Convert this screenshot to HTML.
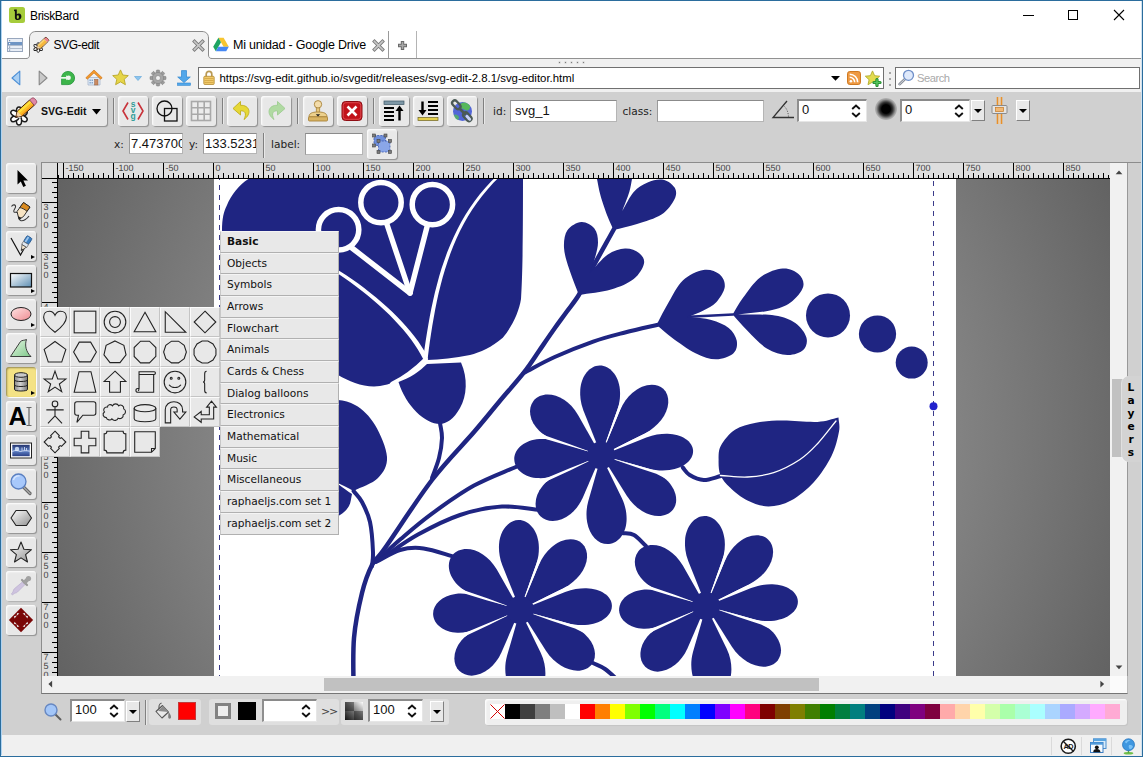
<!DOCTYPE html>
<html lang="en">
<head>
<meta charset="utf-8">
<title>BriskBard - SVG-edit</title>
<style>
*{box-sizing:border-box;margin:0;padding:0}
html,body{width:1143px;height:757px;overflow:hidden;background:#fff}
body{font-family:"Liberation Sans",sans-serif;font-size:12px;color:#000;position:relative}
.abs{position:absolute}
svg{display:block;overflow:visible}
#win{position:absolute;left:0;top:0;width:1143px;height:757px;background:#fff;overflow:hidden}
#title{left:30px;top:8px;font-size:12px;line-height:16px;color:#000;letter-spacing:-.37px}
#tabbar{left:1px;top:30px;width:1141px;height:29px;background:#fff;border-bottom:1px solid #919191}
.tab{position:absolute;top:31px;height:28px;font-size:12.5px;line-height:27px;white-space:nowrap}
#navbar{left:1px;top:59px;width:1141px;height:33px;background:#f0f0f0}
.field{position:absolute;background:#fff;border:1px solid #7a7a7a}
#page{left:1px;top:92px;width:1141px;height:643px;background:#d0d0d0}
#status{left:1px;top:735px;width:1141px;height:22px;background:#f0f0f0}
.se{font-family:"DejaVu Sans","Liberation Sans",sans-serif}
/* svg-edit */
.tb{position:absolute;width:30px;height:30px;background:#e8e8e8;border-radius:3px;box-shadow:inset 1px 1px 2px #fff,1px 1px 1px rgba(0,0,0,.3)}
.tb.cur{background:#f4e284;box-shadow:inset 1px 1px 2px rgba(0,0,0,.4),1px 1px 1px #fff}
.tb svg{position:absolute;left:3px;top:3px;width:24px;height:24px}
.sep{position:absolute;width:2px;border-left:1px solid #808080;border-right:1px solid #e8e8e8}
.lbl{position:absolute;font-family:"DejaVu Sans","Liberation Sans",sans-serif;font-size:10.6px;line-height:14px;color:#222;white-space:nowrap}
.inp{position:absolute;background:#fff;border:1px solid #b5b5b5;border-top-color:#8b8b8b;border-left-color:#9a9a9a;font-size:13px;line-height:20px;padding-left:4px;overflow:hidden;white-space:nowrap;color:#111}
.inp.spin{border-top:2px solid #8a8a8a;border-left:2px solid #8f8f8f;border-right:1px solid #e6e6e6;border-bottom:1px solid #e6e6e6;line-height:18px}
.dd{position:absolute;width:14px;height:21px;background:#e8e8e8;border:1px solid #fff;border-right-color:#808080;border-bottom-color:#808080}
.dd:after{content:"";position:absolute;left:2px;top:8px;border:4px solid transparent;border-top:4px solid #000;border-bottom:none}
#work{left:58px;top:179px;width:1053px;height:497px;overflow:hidden;background:radial-gradient(circle 1000px at 527px 250px,#bbb 0.3%,#222 100%)}
#canvas{position:absolute;left:156px;top:0;width:742px;height:497px;background:#fff}
.cat{position:absolute;left:220px;width:119px;height:22px;background:#e8e8e8;border:1px solid #b0b0b0;border-top-color:#f4f4f4;border-left-color:#c8c8c8;font-family:"DejaVu Sans","Liberation Sans",sans-serif;font-size:10.6px;line-height:19px;padding-left:6px;color:#111;white-space:nowrap}
.cell{position:absolute;width:30px;height:30px;background:#e8e8e8;border:1px solid #fbfbfb;border-right-color:#c4c4c4;border-bottom-color:#c4c4c4}
.cell svg{position:absolute;left:1px;top:1px;width:26px;height:26px;fill:none;stroke:#222;stroke-width:1}
</style>
</head>
<body>
<div id="win">

<!-- title bar -->
<!-- app icon -->
<svg class="abs" style="left:9px;top:7px" width="16" height="16" viewBox="0 0 16 16"><rect width="16" height="16" rx="2.5" fill="#a6cc3b"/><path d="M5.2,2.6h2.6v4.6c.6-.5 1.300-.8 2.100-.7c1.700.2 2.600 1.500 2.500 3.300c-.1 1.900-1.400 3.300-3.600 3.300c-1.700 0-2.900-.8-2.900-2.700V4.300l-.9-.3z M7.800,8.700v2.100c0,.7.400,1 .9,1c.8,0 1.200-.8 1.200-1.900c0-1.100-.4-1.700-1.100-1.700c-.4,0-.8.200-1,.5z" fill="#111"/></svg>
<div class="abs" id="title">BriskBard</div>
<!-- window controls -->
<svg class="abs" style="left:1023px;top:10px" width="102" height="11" viewBox="0 0 102 11" fill="none" stroke="#000" stroke-width="1" shape-rendering="crispEdges"><path d="M0,5.500h10.500"/><rect x="45.500" y=".5" width="9" height="9"/><path d="M91,0l10,10M101,0l-10,10" shape-rendering="auto" stroke-width="1.100"/></svg>

<!-- tab bar -->
<div class="abs" id="tabbar"></div>
<!-- tab list icon -->
<svg class="abs" style="left:7px;top:37px" width="16" height="16" viewBox="0 0 16 16"><rect x=".5" y="1.500" width="15" height="13" fill="#e9eef6" stroke="#98a7bd"/><rect x="1" y="5" width="14" height="3" fill="#6f95c4"/><path d="M1,8.500h14M1,11.500h14" stroke="#b0bccd"/><rect x="2" y="3" width="1.200" height="1.200" fill="#7890b0"/><rect x="2" y="6" width="1.200" height="1.200" fill="#fff"/><rect x="2" y="9.500" width="1.200" height="1.200" fill="#7890b0"/><rect x="2" y="12.500" width="1.200" height="1.200" fill="#7890b0"/></svg>
<svg class="abs" style="left:26px;top:30px" width="186" height="29" viewBox="0 0 186 29"><path d="M0,28.500C2,28.500 3.500,27.500 3.500,25V8C3.500,4 6,1.500 10,1.500H176C180,1.500 182.500,4 182.500,8V25C182.500,27.500 184,28.500 186,28.500V29H0Z" fill="#f0f0f0"/><path d="M0,28.500C2,28.500 3.500,27.500 3.500,25V8C3.500,4 6,1.500 10,1.500H176C180,1.500 182.500,4 182.500,8V25C182.500,27.500 184,28.500 186,28.500" fill="none" stroke="#8a8a8a" stroke-width="1"/></svg>
<div class="tab" style="left:53.500px;top:32px;font-size:12px;letter-spacing:-.42px">SVG-edit</div>
<!-- svg-edit favicon -->
<svg class="abs" style="left:33px;top:36px" width="17" height="17" viewBox="0 0 17 17"><g transform="translate(5.200,11.500)"><g fill="#fff" stroke="#222" stroke-width=".9"><ellipse rx="1.400" ry="2.300" cy="-2.600"/><ellipse rx="1.400" ry="2.300" cy="-2.600" transform="rotate(60)"/><ellipse rx="1.400" ry="2.300" cy="-2.600" transform="rotate(120)"/><ellipse rx="1.400" ry="2.300" cy="-2.600" transform="rotate(180)"/><ellipse rx="1.400" ry="2.300" cy="-2.600" transform="rotate(240)"/><ellipse rx="1.400" ry="2.300" cy="-2.600" transform="rotate(300)"/></g></g><g transform="rotate(-44 9 8)"><path d="M5,5.600h10.500a1.300,1.300 0 0 1 1.300,1.300v2.200a1.300,1.300 0 0 1 -1.300,1.300H5L1.800,8z" fill="none" stroke="#4a2a10" stroke-width=".9"/><rect x="5" y="5.800" width="9" height="4.400" fill="#f6b73c"/><rect x="5" y="5.800" width="9" height="1.500" fill="#fbd875"/><path d="M14,5.800h1.500a1.300,1.300 0 0 1 1.300,1.300v1.800a1.300,1.300 0 0 1 -1.300,1.300h-1.500z" fill="#e8828c"/><path d="M5,5.800L2,8L5,10.200z" fill="#f3d6a8"/><path d="M3,7.300L2,8L3,8.700z" fill="#333"/></g></svg>
<!-- tab close 1 -->
<svg class="abs" style="left:193px;top:40px" width="11" height="11" viewBox="0 0 11 11"><path d="M1.500,1.500L9.500,9.500M9.500,1.500L1.500,9.500" stroke="#7a7a7a" stroke-width="3.400" stroke-linecap="square"/><path d="M1.500,1.500L9.500,9.500M9.500,1.500L1.500,9.500" stroke="#c8c8c8" stroke-width="1.700" stroke-linecap="square"/></svg>
<!-- google drive icon -->
<svg class="abs" style="left:213px;top:37px" width="16" height="15" viewBox="0 0 16 15"><path d="M5.400,.8h5.200l5.200,9h-5.200z" fill="#f7c530"/><path d="M5.400,.8L.2,9.800l2.600,4.500L8,5.300z" fill="#1da462"/><path d="M5.400,9.800h10.400l-2.600,4.500H2.800z" fill="#4688f4"/></svg>
<div class="tab" style="left:233px;top:32px;letter-spacing:-.22px">Mi unidad - Google Drive</div>
<svg class="abs" style="left:373px;top:40px" width="11" height="11" viewBox="0 0 11 11"><path d="M1.500,1.500L9.500,9.500M9.500,1.500L1.500,9.500" stroke="#7a7a7a" stroke-width="3.400" stroke-linecap="square"/><path d="M1.500,1.500L9.500,9.500M9.500,1.500L1.500,9.500" stroke="#c8c8c8" stroke-width="1.700" stroke-linecap="square"/></svg>
<div class="abs" style="left:388px;top:31px;width:1px;height:27px;background:#9a9a9a"></div>
<div class="abs" style="left:416px;top:31px;width:1px;height:27px;background:#b4b4b4"></div>
<svg class="abs" style="left:397px;top:40px" width="11" height="11" viewBox="0 0 11 11"><path d="M5.500,1v9M1,5.500h9" stroke="#6a6a6a" stroke-width="3.400"/><path d="M5.500,2v7M2,5.500h7" stroke="#a8a8a8" stroke-width="1.500"/></svg>

<!-- nav bar -->
<div class="abs" id="navbar"></div>
<div class="abs" style="left:559px;top:62px;width:1px;height:1px;background:#7d7d7d;box-shadow:0 0 0 .5px rgba(125,125,125,.35)"></div><div class="abs" style="left:565px;top:62px;width:1px;height:1px;background:#7d7d7d;box-shadow:0 0 0 .5px rgba(125,125,125,.35)"></div><div class="abs" style="left:571px;top:62px;width:1px;height:1px;background:#7d7d7d;box-shadow:0 0 0 .5px rgba(125,125,125,.35)"></div><div class="abs" style="left:577px;top:62px;width:1px;height:1px;background:#7d7d7d;box-shadow:0 0 0 .5px rgba(125,125,125,.35)"></div><div class="abs" style="left:583px;top:62px;width:1px;height:1px;background:#7d7d7d;box-shadow:0 0 0 .5px rgba(125,125,125,.35)"></div>
<!-- back / forward -->
<svg class="abs" style="left:11px;top:70px" width="10" height="16" viewBox="0 0 10 16"><path d="M8.800,1.200V14.800L1,8z" fill="#a9cff3" stroke="#4b8fd6" stroke-width="1.100" stroke-linejoin="round"/></svg>
<svg class="abs" style="left:38px;top:70px" width="10" height="16" viewBox="0 0 10 16"><path d="M1.200,1.200V14.800L9,8z" fill="#c9c9c9" stroke="#878787" stroke-width="1.100" stroke-linejoin="round"/></svg>
<!-- reload -->
<svg class="abs" style="left:61px;top:71px" width="14" height="14" viewBox="0 0 14 14"><path d="M7,.4a6.600,6.600 0 1 1 0,13.200H.6V7.600A6.600,6.600 0 0 1 7,.4z" fill="#3db54a" stroke="#23933a" stroke-width=".8"/><path d="M1.500,2.200L6,2.200" stroke="#3db54a" stroke-width="1"/><circle cx="7.600" cy="6.800" r="2.300" fill="#eef6ee"/><path d="M0,6h6.200v1.700H0z" fill="#eef6ee"/><path d="M5.200,4.300l2.800,2.500l-2.800,2.500z" fill="#eef6ee"/><path d="M.3,.3h3.500L.3,3.500z" fill="#f0f0f0"/></svg>
<!-- home -->
<svg class="abs" style="left:85px;top:69px" width="18" height="17" viewBox="0 0 18 17"><path d="M3,8.500h12v7.500H3z" fill="#dfeaf6" stroke="#9db0c8" stroke-width=".7"/><path d="M9,1L.8,8.800l1.500,1.400L9,3.900l6.700,6.300l1.500-1.400z" fill="#f39a2e" stroke="#c86d12" stroke-width=".6"/><rect x="9.600" y="10.300" width="3.400" height="5.700" fill="#c98a62" stroke="#96603f" stroke-width=".5"/><path d="M4.500,10.500h1.300v1.500H4.500zM6.600,10.500h1.300v1.500H6.600zM4.500,13h1.300v1.500H4.500zM6.600,13h1.300v1.500H6.600z" fill="#7ea0c8"/></svg>
<!-- star -->
<svg class="abs" style="left:112px;top:69px" width="17" height="17" viewBox="0 0 17 17"><path d="M8.500,.9l2.300,5.100l5.500,.6l-4.100,3.700l1.200,5.400l-4.900-2.800l-4.900,2.800l1.200-5.400L.7,6.600l5.500-.6z" fill="#e6d548" stroke="#b9a72a" stroke-width=".9" stroke-linejoin="round"/></svg>
<svg class="abs" style="left:134px;top:76px" width="8" height="5" viewBox="0 0 8 5"><path d="M.5,.5h7L4,4.500z" fill="#8cc4ee" stroke="#5aa2d8" stroke-width=".6"/></svg>
<!-- gear -->
<svg class="abs" style="left:150px;top:70px" width="16" height="16" viewBox="0 0 16 16"><g transform="translate(8,8)"><g fill="#9b9b9b" stroke="#7b7b7b" stroke-width=".5"><rect x="-1.700" y="-8" width="3.400" height="16" rx=".8"/><rect x="-1.700" y="-8" width="3.400" height="16" rx=".8" transform="rotate(45)"/><rect x="-1.700" y="-8" width="3.400" height="16" rx=".8" transform="rotate(90)"/><rect x="-1.700" y="-8" width="3.400" height="16" rx=".8" transform="rotate(135)"/></g><circle r="5.600" fill="#a6a6a6" stroke="#7b7b7b" stroke-width=".5"/><circle r="2.500" fill="#f0f0f0" stroke="#7b7b7b" stroke-width=".6"/></g></svg>
<!-- download -->
<svg class="abs" style="left:176px;top:70px" width="16" height="16" viewBox="0 0 16 16"><path d="M5.500,.6h5v6.400h3.800L8,12.600L1.700,7h3.800z" fill="#52a7ea" stroke="#2f86d0" stroke-width=".7" stroke-linejoin="round"/><rect x="1.500" y="13" width="13" height="2.300" fill="#52a7ea" stroke="#2f86d0" stroke-width=".6"/></svg>
<!-- url field -->
<div class="field" style="left:198px;top:67px;width:686px;height:22px;border-color:#707070"></div>
<svg class="abs" style="left:203px;top:70px" width="12" height="15" viewBox="0 0 12 15"><path d="M3.200,7V4.200a2.800,2.800 0 0 1 5.600,0V7" fill="none" stroke="#b99a55" stroke-width="1.700"/><rect x=".8" y="6.300" width="10.400" height="8.200" rx="1" fill="#f0c96a" stroke="#b48a32" stroke-width=".8"/><path d="M1.500,8.500h9M1.500,10.500h9M1.500,12.500h9" stroke="#d2a444" stroke-width=".8"/></svg>
<div class="abs" style="left:219.500px;top:70px;font-size:11.380px;line-height:16px;white-space:nowrap;color:#000">https://svg-edit.github.io/svgedit/releases/svg-edit-2.8.1/svg-editor.html</div>
<svg class="abs" style="left:831px;top:76px" width="9" height="5" viewBox="0 0 9 5"><path d="M0,0h9L4.500,4.800z" fill="#000"/></svg>
<!-- rss -->
<svg class="abs" style="left:847px;top:71px" width="14" height="14" viewBox="0 0 14 14"><rect x=".5" y=".5" width="13" height="13" rx="2.300" fill="#ee9a43" stroke="#d07a22"/><circle cx="3.900" cy="10.200" r="1.300" fill="#fff"/><path d="M2.700,6.200a5,5 0 0 1 5,5M2.700,3.200a8,8 0 0 1 8,8" fill="none" stroke="#fff" stroke-width="1.500"/></svg>
<!-- star plus -->
<svg class="abs" style="left:865px;top:70px" width="17" height="17" viewBox="0 0 17 17"><path d="M7.500,.9l2.100,4.800l5.100,.5l-3.800,3.500l1.100,5l-4.500-2.600L3,14.700l1.100-5L.3,6.200l5.100-.5z" fill="#e2dc4e" stroke="#b3ab2c" stroke-width=".9" stroke-linejoin="round"/><path d="M12,9.500v6M9,12.500h6" stroke="#1d8a28" stroke-width="3.200" stroke-linecap="round"/><path d="M12,9.700v5.600M9.200,12.500h5.600" stroke="#56c45e" stroke-width="1.500" stroke-linecap="round"/></svg>
<div class="abs" style="left:889px;top:72px;width:2px;height:2px;background:#a5a5a5"></div><div class="abs" style="left:889px;top:78px;width:2px;height:2px;background:#a5a5a5"></div><div class="abs" style="left:889px;top:84px;width:2px;height:2px;background:#a5a5a5"></div>
<!-- search -->
<div class="field" style="left:895px;top:67px;width:245px;height:22px;border-color:#707070"></div>
<svg class="abs" style="left:898px;top:69px" width="17" height="17" viewBox="0 0 17 17"><path d="M7,10L1.500,15.200" stroke="#8a8f99" stroke-width="2.600" stroke-linecap="round"/><path d="M7,10L1.500,15.200" stroke="#cfd4dc" stroke-width="1" stroke-linecap="round"/><circle cx="10.500" cy="6.300" r="5" fill="#dfe9fb" stroke="#6f8fc8" stroke-width="1.300"/></svg>
<div class="abs" style="left:917px;top:70px;font-size:11.200px;line-height:16px;color:#a9a9a9;letter-spacing:-.5px">Search</div>

<!-- status bar -->
<div class="abs" id="status"></div>
<div class="abs" style="left:1051px;top:737px;width:1px;height:18px;background:#dadada"></div>
<div class="abs" style="left:1081px;top:737px;width:1px;height:18px;background:#dadada"></div>
<div class="abs" style="left:1111px;top:737px;width:1px;height:18px;background:#dadada"></div>
<!-- ad icon -->
<svg class="abs" style="left:1059.500px;top:737.500px" width="16.500" height="16.500" viewBox="0 0 17 17"><circle cx="8.500" cy="8.500" r="7.300" fill="#fff" stroke="#1a1a1a" stroke-width="1.600"/><path d="M3.300,3.300L13.700,13.700" stroke="#1a1a1a" stroke-width="1.400"/><text x="8.500" y="11.300" font-family="Liberation Sans, sans-serif" font-weight="700" font-size="7.500" text-anchor="middle" fill="#1a1a1a" letter-spacing="-.5">AD</text></svg>
<!-- user windows icon -->
<svg class="abs" style="left:1090px;top:738px" width="17" height="15" viewBox="0 0 17 15"><rect x="3.500" y=".8" width="12.500" height="9.700" fill="#d9edfb" stroke="#4d8fcf" stroke-width="1"/><rect x="3.500" y=".8" width="12.500" height="2.200" fill="#5aa5e0"/><rect x=".5" y="4.500" width="12.500" height="10" fill="#f4faff" stroke="#3d7fc4" stroke-width="1"/><rect x=".5" y="4.500" width="12.500" height="2.200" fill="#4f9bdc"/><circle cx="6.800" cy="9.300" r="1.900" fill="#111"/><path d="M3.200,14.300c0-2.300 1.500-3.300 3.600-3.300s3.600,1 3.600,3.300z" fill="#111"/></svg>
<!-- globe icon -->
<svg class="abs" style="left:1120.500px;top:737.500px" width="15" height="17" viewBox="0 0 17 19"><ellipse cx="8.500" cy="17.200" rx="5.500" ry="1.500" fill="#6fbf4a"/><rect x="7.700" y="13" width="1.600" height="4" fill="#5aa83a"/><circle cx="8.500" cy="7.500" r="6.800" fill="#3f97e0" stroke="#1d6db8" stroke-width=".8"/><path d="M4.500,4c1.500-1.800 4-2.300 6-1.500c-1,1.200-3,1-3.500,2.500c-.4,1.300-1.800,.8-2.500,-1zM9,8c1.500-.5 3.500,0 4.500,1.500c-.5,1.800-2,3-3.500,3.200c-.8-1.200-1.800-3-1-4.700z" fill="#8fd0ff" opacity=".75"/></svg>


<!-- page -->
<div class="abs" id="page"></div>

<!-- ===== svg-edit top toolbar ===== -->
<div class="tb" style="left:6px;top:96px;width:101px"></div>
<svg class="abs" style="left:8px;top:96px" width="32" height="30" viewBox="0 0 32 30"><g transform="translate(11,20)"><g fill="#fff" stroke="#1a1a1a" stroke-width="1.500"><ellipse rx="2.600" ry="4.300" cy="-4.800"/><ellipse rx="2.600" ry="4.300" cy="-4.800" transform="rotate(60)"/><ellipse rx="2.600" ry="4.300" cy="-4.800" transform="rotate(120)"/><ellipse rx="2.600" ry="4.300" cy="-4.800" transform="rotate(180)"/><ellipse rx="2.600" ry="4.300" cy="-4.800" transform="rotate(240)"/><ellipse rx="2.600" ry="4.300" cy="-4.800" transform="rotate(300)"/></g><circle r="2.200" fill="#fff"/></g><g transform="rotate(-42 18 12)"><path d="M9.500,8.500h16.500v7H9.500L4,12z" fill="#f8a01c" stroke="#3a1c05" stroke-width=".9" stroke-linejoin="round"/><rect x="9.500" y="9" width="16.500" height="2.600" fill="#ffe13a"/><rect x="9.500" y="11.600" width="16.500" height="1.800" fill="#fbc02a"/><path d="M26,8.500h2.300a2.400,2.400 0 0 1 2.400,2.400v2.200a2.400,2.400 0 0 1 -2.400,2.400h-2.300z" fill="#e089a6" stroke="#8a3d55" stroke-width=".7"/><path d="M9.500,8.900L4.500,12L9.500,15.100z" fill="#f3d3a4"/><path d="M6.300,10.900L4.500,12L6.300,13.100z" fill="#5a2a1a"/></g></svg>
<div class="abs" style="left:41px;top:104px;font-size:10.500px;font-weight:700;line-height:14px;color:#111;white-space:nowrap">SVG-Edit</div>
<svg class="abs" style="left:91.500px;top:108.500px" width="9" height="5.500" viewBox="0 0 9 5.500"><path d="M0,0h9L4.500,5.500z" fill="#000"/></svg>
<div class="sep" style="left:113px;top:98px;height:26px"></div>

<!-- source -->
<div class="tb" style="left:118px;top:96px"><svg viewBox="0 0 24 24"><path d="M7,3.500L2,12L7,20.500M17,3.500L22,12L17,20.500" fill="none" stroke="#c8323a" stroke-width="1.600"/><g font-family="Liberation Sans, sans-serif" font-weight="700" font-size="8.500" fill="#2f9c98" text-anchor="middle"><text x="12" y="7.500">s</text><text x="12" y="14">v</text><text x="12" y="20">g</text></g></svg></div>
<!-- wireframe -->
<div class="tb" style="left:152px;top:96px"><svg viewBox="0 0 24 24"><circle cx="9.500" cy="9.500" r="7.500" fill="none" stroke="#111" stroke-width="1.300"/><rect x="9.500" y="9.500" width="12.500" height="12.500" fill="none" stroke="#111" stroke-width="1.300"/></svg></div>
<!-- grid -->
<div class="tb" style="left:186px;top:96px"><svg viewBox="0 0 24 24"><rect x="2.500" y="2.500" width="19" height="19" fill="#ececec" stroke="#a9a9a9" stroke-width="1.600"/><path d="M8.800,2.500v19M15.200,2.500v19M2.500,8.800h19M2.500,15.200h19" stroke="#a9a9a9" stroke-width="1.600"/></svg></div>
<div class="sep" style="left:222px;top:98px;height:26px"></div>
<!-- undo -->
<div class="tb" style="left:227px;top:96px"><svg viewBox="0 0 24 24"><path d="M10.500,2.500L3,9.500l7.500,6.500v-4.200c4.500-.3 6.500,2.500 3.500,8.700c8-5.500 6-14.500-3.500-14.200z" fill="#e6d837" stroke="#bfae1c" stroke-width=".9" stroke-linejoin="round"/></svg></div>
<!-- redo -->
<div class="tb" style="left:261px;top:96px"><svg viewBox="0 0 24 24" opacity=".75"><path d="M13.500,2.500L21,9.500l-7.500,6.500v-4.200c-4.500-.3-6.500,2.500-3.500,8.700c-8-5.500-6-14.500 3.500-14.200z" fill="#9ed68b" stroke="#86c474" stroke-width=".9" stroke-linejoin="round"/></svg></div>
<div class="sep" style="left:297px;top:98px;height:26px"></div>
<!-- stamp -->
<div class="tb" style="left:303px;top:96px"><svg viewBox="0 0 24 24"><rect x="10.300" y="8" width="3.400" height="6.500" fill="#e8c87c" stroke="#a8833a" stroke-width=".8"/><circle cx="12" cy="5.300" r="3.700" fill="#f3dcaa" stroke="#a8833a" stroke-width=".9"/><path d="M3,18c0-3.500 2.500-5 9-5s9,1.500 9,5z" fill="#ecd08c" stroke="#a8833a" stroke-width=".9"/><rect x="2.500" y="17.800" width="19" height="4.200" rx="1" fill="#d9b463" stroke="#a8833a" stroke-width=".9"/><path d="M9.800,15.200h4.400l-2.200,2.400z" fill="#222"/></svg></div>
<!-- delete -->
<div class="tb" style="left:337px;top:96px"><svg viewBox="0 0 24 24"><rect x="2" y="2.500" width="20" height="19" rx="3.500" fill="#c2131b" stroke="#8e0d13" stroke-width="1"/><rect x="3.200" y="3.700" width="17.600" height="16.600" rx="2.600" fill="none" stroke="#e0575c" stroke-width=".8"/><path d="M7.500,7.500l9,9M16.500,7.500l-9,9" stroke="#fff" stroke-width="2.600"/></svg></div>
<div class="sep" style="left:373px;top:98px;height:26px"></div>
<!-- move top -->
<div class="tb" style="left:379px;top:96px"><svg viewBox="0 0 24 24"><rect x="2" y="2" width="20" height="3.500" fill="#7d97a6" stroke="#3d5666" stroke-width=".7"/><path d="M2,9h10M2,13h10M2,17h10M2,21h10" stroke="#000" stroke-width="2.200"/><path d="M17.500,21.500V11" stroke="#000" stroke-width="2.400"/><path d="M13.500,12l4-5.500l4,5.500z" fill="#000"/></svg></div>
<!-- move bottom -->
<div class="tb" style="left:413px;top:96px"><svg viewBox="0 0 24 24"><rect x="2" y="18.500" width="20" height="3" fill="#e3cf4b" stroke="#6e6320" stroke-width=".7"/><path d="M12,3h10M12,7h10M12,11h10M12,15h10" stroke="#000" stroke-width="2.200"/><path d="M6.500,2.500V12" stroke="#000" stroke-width="2.400"/><path d="M2.500,11l4,5.500l4-5.500z" fill="#000"/></svg></div>
<!-- link -->
<div class="tb" style="left:447px;top:96px"><svg viewBox="0 0 24 24"><circle cx="12.500" cy="12.500" r="9.500" fill="#5265d8"/><path d="M11,4.500c3-2 7-.5 9,2.500c.5,2.500-1,4.500-3.500,4.500c-2.500-.5-3-2-5-2c-1.500-.5-2-3.500-.5-5z" fill="#55b85c"/><path d="M4,16c2-1 4,0 5,2c0,1.500-.5,2.500-1.500,3c-2-1-3-3-3.500-5z" fill="#55b85c" opacity=".8"/><g fill="none" stroke="#4b5a55" stroke-width="2.300"><rect x="-2.600" y="-6" width="5.200" height="10" rx="2.600" transform="translate(7,6.500) rotate(-42)"/><rect x="-2.600" y="-6" width="5.200" height="10" rx="2.600" transform="translate(18,18.500) rotate(-42)"/><path d="M9.500,9.500L16,16" stroke-width="2.600"/></g><rect x="-1.400" y="-3.500" width="2.800" height="7" rx="1.400" transform="translate(18.300,18.800) rotate(-42)" fill="#c9d3f5"/></svg></div>
<div class="sep" style="left:483px;top:98px;height:26px"></div>

<div class="lbl" style="left:493px;top:104px">id:</div>
<div class="inp" style="left:510px;top:100px;width:107px;height:22px">svg_1</div>
<div class="lbl" style="left:622.500px;top:104px">class:</div>
<div class="inp" style="left:657px;top:100px;width:107px;height:22px"></div>
<!-- angle -->
<svg class="abs" style="left:771px;top:100px" width="24" height="19" viewBox="0 0 24 19"><path d="M16,1L2,17.500H23" fill="none" stroke="#333" stroke-width="1.300"/><path d="M13.500,6.500c2.500,2.500 4,6.500 4,11" fill="none" stroke="#555" stroke-width=".9" stroke-dasharray="1.200 1.300"/></svg>
<div class="inp spin" style="left:797px;top:99px;width:70px;height:23px;padding-left:3px">0</div>
<svg class="abs" style="left:851px;top:104px" width="10" height="14" viewBox="0 0 10 14" fill="none" stroke="#111" stroke-width="1.900"><path d="M1.200,5L5,1.500L8.800,5M1.200,9L5,12.500L8.800,9"/></svg>
<!-- blur -->
<div class="abs" style="left:875px;top:98px;width:22px;height:22px;border-radius:50%;background:radial-gradient(circle,#000 0%,#000 28%,rgba(0,0,0,.75) 44%,rgba(0,0,0,.25) 62%,rgba(0,0,0,0) 80%)"></div>
<div class="inp spin" style="left:900px;top:99px;width:70px;height:23px;padding-left:3px">0</div>
<svg class="abs" style="left:954px;top:104px" width="10" height="14" viewBox="0 0 10 14" fill="none" stroke="#111" stroke-width="1.900"><path d="M1.200,5L5,1.500L8.800,5M1.200,9L5,12.500L8.800,9"/></svg>
<div class="dd" style="left:971px;top:100px"></div>
<!-- align/slider icon -->
<svg class="abs" style="left:991px;top:97px" width="17" height="27" viewBox="0 0 17 27"><path d="M6.500,0V27M10.500,0V27" stroke="#e8902a" stroke-width="1.600"/><path d="M8.500,0V27" stroke="#f7cf9c" stroke-width="1.400"/><rect x="1" y="8.500" width="15" height="8" rx="1" fill="#e4e4e4" stroke="#8a8a8a" stroke-width="1"/><rect x="4.500" y="10.500" width="8" height="4" fill="#f2b874" stroke="#c57a24" stroke-width=".7"/></svg>
<div class="dd" style="left:1016px;top:100px"></div>

<!-- row 2 -->
<div class="lbl" style="left:114px;top:137px">x:</div>
<div class="inp" style="left:129px;top:133px;width:54px;height:21px;padding-left:1px;font-size:13px">7.473700</div>
<div class="lbl" style="left:189px;top:137px">y:</div>
<div class="inp" style="left:203px;top:133px;width:54px;height:21px;padding-left:1px;font-size:13px">133.5231</div>
<div class="sep" style="left:263px;top:133px;height:25px"></div>
<div class="lbl" style="left:271px;top:137px">label:</div>
<div class="inp" style="left:305px;top:133px;width:58px;height:22px"></div>
<!-- group icon -->
<div class="tb" style="left:367px;top:129px"><svg viewBox="0 0 24 24"><rect x="4" y="3.500" width="11.500" height="10" fill="#6f8fdb" stroke="#3d5bb0" stroke-width=".8" stroke-dasharray="2 1.200"/><rect x="8.500" y="9" width="11.500" height="11" fill="#8aa6e8" stroke="#3d5bb0" stroke-width=".8" stroke-dasharray="2 1.200"/><g fill="#7b7b7b" stroke="#444" stroke-width=".6"><rect x="2.500" y="2" width="3" height="3"/><rect x="14" y="2" width="3" height="3"/><rect x="2.500" y="12" width="3" height="3"/><rect x="7" y="7.500" width="3" height="3"/><rect x="18.500" y="7.500" width="3" height="3"/><rect x="7" y="18.500" width="3" height="3"/><rect x="18.500" y="18.500" width="3" height="3"/></g></svg></div>

<!-- ===== left tools ===== -->
<svg width="0" height="0" class="abs"><defs>
<linearGradient id="gRect" x1="0" y1="0" x2="1" y2="1"><stop offset="0" stop-color="#ffffff"/><stop offset="1" stop-color="#5d8eb3"/></linearGradient>
<linearGradient id="gEll" x1="0" y1="0" x2="1" y2="1"><stop offset="0" stop-color="#ffe4e4"/><stop offset="1" stop-color="#f08c92"/></linearGradient>
<linearGradient id="gPath" x1="0" y1="0" x2="1" y2="1"><stop offset="0" stop-color="#e9f7e6"/><stop offset="1" stop-color="#7fc98a"/></linearGradient>
<linearGradient id="gHex" x1="0" y1="0" x2="1" y2="1"><stop offset="0" stop-color="#ffffff"/><stop offset="1" stop-color="#8f8f8f"/></linearGradient>
<linearGradient id="gCyl" x1="0" y1="0" x2="1" y2="0"><stop offset="0" stop-color="#8a8a8a"/><stop offset=".45" stop-color="#d2d2d2"/><stop offset="1" stop-color="#777"/></linearGradient>
<linearGradient id="gImg" x1="0" y1="0" x2="0" y2="1"><stop offset="0" stop-color="#24346e"/><stop offset=".55" stop-color="#5c7fc4"/><stop offset="1" stop-color="#2b3f86"/></linearGradient>
</defs></svg>
<!-- select -->
<div class="tb" style="left:6px;top:163px"><svg viewBox="0 0 24 24"><path d="M8.500,4V18.500l3.300-3l2.500,5.500l2.600-1.200l-2.500-5.400h4.600z" fill="#000"/></svg></div>
<!-- pencil -->
<div class="tb" style="left:6px;top:197px"><svg viewBox="0 0 24 24"><path d="M2.500,6.500c1.500-2.500 4.500-2 4,.5c-.4,2-2.800,4-1.500,5c1.200,.8 3.500,-.5 4.500,1.500c1,2.500 0,6 2,7c2.500,1 6.500-1.500 8.500-4.500" fill="none" stroke="#333" stroke-width="1.100"/><path d="M14.500,2.500l6.500,4.500l-6.500,9.500l-4.500,3l-2-8z" fill="#f7e3c2" stroke="#222" stroke-width=".9" stroke-linejoin="round"/><path d="M14.500,2.500l6.500,4.500l-3,4.300c-2.500-2.200-5.500-3.500-7.300-3.700z" fill="#d98a1f" stroke="#222" stroke-width=".9" stroke-linejoin="round"/><path d="M10,19.500l-1-3.300l3.600,1.500z" fill="#222"/></svg></div>
<!-- line -->
<div class="tb" style="left:6px;top:231px"><svg viewBox="0 0 24 24"><path d="M2,4L11.500,21L16,13" fill="none" stroke="#111" stroke-width="1.200"/><g transform="rotate(32 17 9)"><rect x="14" y="2" width="6" height="7" rx="1.200" fill="#3b7fc2" stroke="#1f4f86" stroke-width=".7"/><rect x="15" y="2.500" width="1.800" height="6" fill="#9cc5ec"/><rect x="14" y="9" width="6" height="3.500" fill="#dfe8f2" stroke="#555" stroke-width=".6"/><path d="M14.500,12.500h5l-2.500,5.500z" fill="#f3e6cf" stroke="#333" stroke-width=".6"/><path d="M16.200,16l.8,2l.8-2z" fill="#111"/></g></svg><i class="fa"></i></div>
<!-- rect -->
<div class="tb" style="left:6px;top:265px"><svg viewBox="0 0 24 24"><rect x="1.500" y="5.500" width="21" height="13.500" fill="url(#gRect)" stroke="#111" stroke-width="1.200"/></svg><i class="fa"></i></div>
<!-- ellipse -->
<div class="tb" style="left:6px;top:299px"><svg viewBox="0 0 24 24"><ellipse cx="12" cy="12" rx="10" ry="6.500" fill="url(#gEll)" stroke="#222" stroke-width="1"/></svg><i class="fa"></i></div>
<!-- path -->
<div class="tb" style="left:6px;top:333px"><svg viewBox="0 0 24 24"><path d="M1.500,20.500L11.500,5.500c1.500-1.500 4-1 6-2c-2,5.500-.5,12.500 4.500,17z" fill="url(#gPath)" stroke="#2c2c2c" stroke-width=".9" stroke-linejoin="round"/></svg></div>
<!-- shapelib (current) -->
<div class="tb cur" style="left:6px;top:367px"><svg viewBox="0 0 24 24"><path d="M5.500,5v14.500c0,2 13,2 13,0V5z" fill="url(#gCyl)" stroke="#222" stroke-width="1"/><ellipse cx="12" cy="5" rx="6.500" ry="2.300" fill="#c9c9c9" stroke="#222" stroke-width="1"/><path d="M5.500,10c0,2 13,2 13,0M5.500,15c0,2 13,2 13,0" fill="none" stroke="#222" stroke-width="1"/></svg><i class="fa"></i></div>
<!-- text -->
<div class="tb" style="left:6px;top:401px"><svg viewBox="0 0 24 24"><text x="-.5" y="21" font-family="Liberation Sans, sans-serif" font-weight="700" font-size="25" fill="#000">A</text><path d="M17.500,3.500h5M17.500,21.500h5M20,3.500v18" stroke="#666" stroke-width="1.200" fill="none"/></svg></div>
<!-- image -->
<div class="tb" style="left:6px;top:435px"><svg viewBox="0 0 24 24"><rect x="1.500" y="5" width="21" height="15" fill="#fff" stroke="#222" stroke-width="1"/><rect x="3.300" y="6.800" width="17.400" height="11.400" fill="url(#gImg)"/><circle cx="8" cy="11" r="2.200" fill="#cfe0f7" opacity=".9"/><path d="M3.300,13.500c3-1.500 5-1.200 8,0c3,-.8 6-1.200 9.400,-.3" stroke="#e8eefc" stroke-width=".9" fill="none" opacity=".9"/><path d="M13,9.500v3M15.500,9v3.500M17.500,10v2.500" stroke="#dfe8fa" stroke-width=".8"/></svg></div>
<!-- zoom -->
<div class="tb" style="left:6px;top:469px"><svg viewBox="0 0 24 24"><path d="M14,14.500l7,7" stroke="#666" stroke-width="3.200" stroke-linecap="round"/><path d="M14,14.500l7,7" stroke="#a9a9a9" stroke-width="1.200" stroke-linecap="round"/><circle cx="9.500" cy="9.500" r="7.500" fill="#a7c8fb" stroke="#5a7fc0" stroke-width="1.300"/><path d="M4.500,8a5.500,5.500 0 0 1 6-4" stroke="#dbe9ff" stroke-width="1.300" fill="none"/></svg></div>
<!-- polygon -->
<div class="tb" style="left:6px;top:503px"><svg viewBox="0 0 24 24"><path d="M7,4.500h10.500l5,7.500l-5,7.500H7L2,12z" fill="url(#gHex)" stroke="#222" stroke-width="1.100" stroke-linejoin="round"/></svg></div>
<!-- star -->
<div class="tb" style="left:6px;top:537px"><svg viewBox="0 0 24 24"><path d="M12,2l2.900,7.200l7.600,.5l-5.900,4.900l1.900,7.400L12,17.900l-6.500,4.100l1.900-7.400L1.500,9.700l7.600-.5z" fill="url(#gHex)" stroke="#222" stroke-width="1.100" stroke-linejoin="round"/></svg></div>
<!-- eyedropper (disabled look) -->
<div class="tb" style="left:6px;top:571px;box-shadow:inset 1px 1px 2px #fff,1px 1px 1px rgba(0,0,0,.15)"><svg viewBox="0 0 24 24" opacity=".55"><path d="M14,7.500l2.500,2.500l-8,8c-1.500,1.500-3,.5-4.500,2.500c-.8,.8-2-.4-1.200-1.200c2-1.500 1-3 2.500-4.500z" fill="#b9a5d8" stroke="#9a86be" stroke-width=".8"/><path d="M13,6l5,5" stroke="#5c5c5c" stroke-width="2.200" stroke-linecap="round"/><path d="M16,8l3-3" stroke="#666" stroke-width="4" stroke-linecap="round"/><circle cx="19.500" cy="4.500" r="2.600" fill="#6a6a6a"/></svg></div>
<!-- red diamond -->
<div class="tb" style="left:6px;top:605px"><svg viewBox="0 0 24 24" style="left:2px;top:2px;width:26px;height:26px"><path d="M12,.8L23.200,12L12,23.200L.8,12z" fill="#7a0606"/><g fill="#e9e9e9"><path d="M5.500,8.500l2.600-.6l-2,2.600z"/><path d="M18.500,8.500l-2.600-.6l2,2.600z"/><path d="M5.500,15.500l2.600,.6l-2-2.600z"/><path d="M18.500,15.500l-2.600,.6l2-2.600z"/><path d="M8.500,5.500l-.6,2.600l2.600-2z"/><path d="M15.500,5.500l.6,2.600l-2.600-2z"/><path d="M8.500,18.500l-.6-2.600l2.600,2z"/><path d="M15.500,18.500l.6-2.600l-2.600,2z"/></g></svg></div>
<style>.fa{position:absolute;right:1px;bottom:2px;width:0;height:0;border:2.500px solid transparent;border-left:4px solid #000;border-right:none}</style>

<svg class="abs" style="left:41px;top:162px" width="1070" height="515" viewBox="41 162 1070 515" shape-rendering="crispEdges" font-family="Liberation Sans, sans-serif" font-size="9" fill="#444">
<rect x="41" y="162" width="1070" height="17" fill="#8c8c8c"/>
<rect x="41" y="162" width="17" height="515" fill="#8c8c8c"/>
<rect x="42" y="163" width="1069" height="15" fill="#dedede"/>
<rect x="42" y="163" width="15" height="513" fill="#dedede"/>
<rect x="42" y="178" width="1069" height="1" fill="#000"/>
<rect x="57" y="163" width="1" height="513" fill="#000"/>
<rect x="42" y="178" width="16" height="1" fill="#000"/>
<path d="M58,174v4 M63,162v16 M68,174v4 M73,172v6 M78,174v4 M83,172v6 M88,174v4 M93,172v6 M98,174v4 M103,172v6 M108,174v4 M113,162v16 M118,174v4 M123,172v6 M128,174v4 M133,172v6 M138,174v4 M143,172v6 M148,174v4 M153,172v6 M158,174v4 M163,162v16 M168,174v4 M173,172v6 M178,174v4 M183,172v6 M188,174v4 M193,172v6 M198,174v4 M203,172v6 M208,174v4 M213,162v16 M218,174v4 M223,172v6 M228,174v4 M233,172v6 M238,174v4 M243,172v6 M248,174v4 M253,172v6 M258,174v4 M263,162v16 M268,174v4 M273,172v6 M278,174v4 M283,172v6 M288,174v4 M293,172v6 M298,174v4 M303,172v6 M308,174v4 M313,162v16 M318,174v4 M323,172v6 M328,174v4 M333,172v6 M338,174v4 M343,172v6 M348,174v4 M353,172v6 M358,174v4 M363,162v16 M368,174v4 M373,172v6 M378,174v4 M383,172v6 M388,174v4 M393,172v6 M398,174v4 M403,172v6 M408,174v4 M413,162v16 M418,174v4 M423,172v6 M428,174v4 M433,172v6 M438,174v4 M443,172v6 M448,174v4 M453,172v6 M458,174v4 M463,162v16 M468,174v4 M473,172v6 M478,174v4 M483,172v6 M488,174v4 M493,172v6 M498,174v4 M503,172v6 M508,174v4 M513,162v16 M518,174v4 M523,172v6 M528,174v4 M533,172v6 M538,174v4 M543,172v6 M548,174v4 M553,172v6 M558,174v4 M563,162v16 M568,174v4 M573,172v6 M578,174v4 M583,172v6 M588,174v4 M593,172v6 M598,174v4 M603,172v6 M608,174v4 M613,162v16 M618,174v4 M623,172v6 M628,174v4 M633,172v6 M638,174v4 M643,172v6 M648,174v4 M653,172v6 M658,174v4 M663,162v16 M668,174v4 M673,172v6 M678,174v4 M683,172v6 M688,174v4 M693,172v6 M698,174v4 M703,172v6 M708,174v4 M713,162v16 M718,174v4 M723,172v6 M728,174v4 M733,172v6 M738,174v4 M743,172v6 M748,174v4 M753,172v6 M758,174v4 M763,162v16 M768,174v4 M773,172v6 M778,174v4 M783,172v6 M788,174v4 M793,172v6 M798,174v4 M803,172v6 M808,174v4 M813,162v16 M818,174v4 M823,172v6 M828,174v4 M833,172v6 M838,174v4 M843,172v6 M848,174v4 M853,172v6 M858,174v4 M863,162v16 M868,174v4 M873,172v6 M878,174v4 M883,172v6 M888,174v4 M893,172v6 M898,174v4 M903,172v6 M908,174v4 M913,162v16 M918,174v4 M923,172v6 M928,174v4 M933,172v6 M938,174v4 M943,172v6 M948,174v4 M953,172v6 M958,174v4 M963,162v16 M968,174v4 M973,172v6 M978,174v4 M983,172v6 M988,174v4 M993,172v6 M998,174v4 M1003,172v6 M1008,174v4 M1013,162v16 M1018,174v4 M1023,172v6 M1028,174v4 M1033,172v6 M1038,174v4 M1043,172v6 M1048,174v4 M1053,172v6 M1058,174v4 M1063,162v16 M1068,174v4 M1073,172v6 M1078,174v4 M1083,172v6 M1088,174v4 M1093,172v6 M1098,174v4 M1103,172v6 M1108,174v4 M51,182h6 M53,187h4 M51,192h6 M53,197h4 M41,202h16 M53,207h4 M51,212h6 M53,217h4 M51,222h6 M53,227h4 M51,232h6 M53,237h4 M51,242h6 M53,247h4 M41,252h16 M53,257h4 M51,262h6 M53,267h4 M51,272h6 M53,277h4 M51,282h6 M53,287h4 M51,292h6 M53,297h4 M41,302h16 M53,307h4 M51,312h6 M53,317h4 M51,322h6 M53,327h4 M51,332h6 M53,337h4 M51,342h6 M53,347h4 M41,352h16 M53,357h4 M51,362h6 M53,367h4 M51,372h6 M53,377h4 M51,382h6 M53,387h4 M51,392h6 M53,397h4 M41,402h16 M53,407h4 M51,412h6 M53,417h4 M51,422h6 M53,427h4 M51,432h6 M53,437h4 M51,442h6 M53,447h4 M41,452h16 M53,457h4 M51,462h6 M53,467h4 M51,472h6 M53,477h4 M51,482h6 M53,487h4 M51,492h6 M53,497h4 M41,502h16 M53,507h4 M51,512h6 M53,517h4 M51,522h6 M53,527h4 M51,532h6 M53,537h4 M51,542h6 M53,547h4 M41,552h16 M53,557h4 M51,562h6 M53,567h4 M51,572h6 M53,577h4 M51,582h6 M53,587h4 M51,592h6 M53,597h4 M41,602h16 M53,607h4 M51,612h6 M53,617h4 M51,622h6 M53,627h4 M51,632h6 M53,637h4 M51,642h6 M53,647h4 M41,652h16 M53,657h4 M51,662h6 M53,667h4 M51,672h6" stroke="#000" stroke-width="1" fill="none" transform="translate(0.5,0.5)"/>
<g shape-rendering="auto" text-rendering="geometricPrecision"><text x="65.6" y="170.6">-150</text><text x="115.6" y="170.6">-100</text><text x="165.6" y="170.6">-50</text><text x="215.6" y="170.6">0</text><text x="265.6" y="170.6">50</text><text x="315.6" y="170.6">100</text><text x="365.6" y="170.6">150</text><text x="415.6" y="170.6">200</text><text x="465.6" y="170.6">250</text><text x="515.6" y="170.6">300</text><text x="565.6" y="170.6">350</text><text x="615.6" y="170.6">400</text><text x="665.6" y="170.6">450</text><text x="715.6" y="170.6">500</text><text x="765.6" y="170.6">550</text><text x="815.6" y="170.6">600</text><text x="865.6" y="170.6">650</text><text x="915.6" y="170.6">700</text><text x="965.6" y="170.6">750</text><text x="1015.6" y="170.6">800</text><text x="1065.6" y="170.6">850</text><text x="43.6" y="210.2">3</text><text x="43.6" y="219.2">0</text><text x="43.6" y="228.2">0</text><text x="43.6" y="260.2">3</text><text x="43.6" y="269.2">5</text><text x="43.6" y="278.2">0</text><text x="43.6" y="310.2">4</text><text x="43.6" y="319.2">0</text><text x="43.6" y="328.2">0</text><text x="43.6" y="360.2">4</text><text x="43.6" y="369.2">5</text><text x="43.6" y="378.2">0</text><text x="43.6" y="410.2">5</text><text x="43.6" y="419.2">0</text><text x="43.6" y="428.2">0</text><text x="43.6" y="460.2">5</text><text x="43.6" y="469.2">5</text><text x="43.6" y="478.2">0</text><text x="43.6" y="510.2">6</text><text x="43.6" y="519.2">0</text><text x="43.6" y="528.2">0</text><text x="43.6" y="560.2">6</text><text x="43.6" y="569.2">5</text><text x="43.6" y="578.2">0</text><text x="43.6" y="610.2">7</text><text x="43.6" y="619.2">0</text><text x="43.6" y="628.2">0</text><text x="43.6" y="660.2">7</text><text x="43.6" y="669.2">5</text><text x="43.6" y="678.2">0</text></g>
</svg>

<!-- workarea -->
<div class="abs" id="work"><div id="canvas"></div>
<svg id="art" class="abs" style="left:0;top:0" width="1053" height="497" viewBox="58 179 1053 497">
<path d="M262,170 L523,170 L523,178 C523,215 523,270 521,299 C519,312 512,327 502.8,337.7 C492,347 480,352.500 470,355 C455,358 440,359.500 427,360 C415,372 400,383 380,386 C365,388 350,382 338,375 L230,335 C222,300 222,250 222,231 C222,218 224,211 226.6,206 C232,193 240,184 250,178 L262,170Z" fill="#1f2582"/>
<path d="M497.6,175.1 L491.3,181.3 L485.4,187.7 L479.8,194.2 L474.7,201.0 L469.8,208.0 L465.3,215.1 L461.1,222.3 L457.2,229.7 L453.6,237.2 L450.2,244.9 L447.1,252.6 L444.3,260.4 L441.6,268.3 L439.2,276.3 L437.0,284.4 L434.9,292.5 L433.1,300.6 L431.3,308.8 L429.7,316.9 L428.3,325.1 L426.9,333.3 L425.6,341.5 L424.4,349.6 L423.3,357.7 L427.7,358.3 L428.7,350.2 L429.8,342.1 L431.0,333.9 L432.3,325.8 L433.7,317.7 L435.2,309.5 L436.8,301.4 L438.6,293.3 L440.6,285.3 L442.7,277.3 L445.0,269.4 L447.6,261.6 L450.3,253.8 L453.3,246.1 L456.5,238.6 L460.0,231.1 L463.8,223.8 L467.9,216.6 L472.3,209.6 L477.0,202.7 L482.1,196.0 L487.5,189.5 L493.2,183.1 L499.4,176.9Z" fill="#fff"/>
<path d="M299.4,251.2 L305.9,254.5 L312.3,258.0 L318.8,261.7 L325.2,265.5 L331.5,269.5 L337.8,273.6 L344.0,277.8 L350.1,282.1 L356.1,286.5 L362.0,291.0 L367.7,295.5 L373.3,300.2 L378.8,304.9 L384.0,309.7 L389.1,314.6 L393.9,319.5 L398.5,324.4 L402.9,329.3 L407.0,334.3 L410.9,339.3 L414.4,344.3 L417.7,349.3 L420.6,354.2 L423.3,359.2 L427.7,356.8 L424.9,351.8 L421.7,346.7 L418.3,341.6 L414.5,336.5 L410.5,331.5 L406.2,326.5 L401.7,321.5 L396.9,316.5 L391.9,311.6 L386.7,306.8 L381.3,302.0 L375.8,297.3 L370.1,292.7 L364.2,288.1 L358.2,283.6 L352.1,279.3 L345.9,275.0 L339.5,270.9 L333.1,266.9 L326.7,263.0 L320.2,259.2 L313.7,255.6 L307.1,252.1 L300.6,248.8Z" fill="#fff"/>
<circle cx="338.6" cy="229.8" r="20.2" fill="none" stroke="#fff" stroke-width="5.5"/>
<circle cx="381" cy="202.6" r="20.2" fill="none" stroke="#fff" stroke-width="5.5"/>
<circle cx="432.4" cy="204.6" r="20.2" fill="none" stroke="#fff" stroke-width="5.5"/>
<path d="M352,248 L410,293" fill="none" stroke="#fff" stroke-width="5.4" stroke-linecap="round"/>
<path d="M386.5,223 L410,293" fill="none" stroke="#fff" stroke-width="5.4" stroke-linecap="round"/>
<path d="M427.5,225 L410,293" fill="none" stroke="#fff" stroke-width="5.4" stroke-linecap="round"/>
<path d="M426,359 C416,369 406,377 392,384" fill="none" stroke="#fff" stroke-width="4.2" stroke-linecap="round"/>
<path d="M427,364 L461,362.5 C468,378 467,396 460,408 C454,419 446,424 440,424 C425,424 406,406 398.5,382 C410,378 420,371 427,364Z" fill="#1f2582"/>
<path d="M440.0,423.0 C440.6,427.5 442.2,432.2 442.0,438.0 C441.8,443.8 440.7,451.3 439.0,458.0 C437.3,464.7 434.1,472.0 432.0,478.0" fill="none" stroke="#1f2582" stroke-width="4" stroke-linecap="round"/>
<path d="M614.0,229.0 C606.7,242.2 595.6,262.0 589.7,273.0 C583.8,284.0 582.7,288.5 578.8,295.0 C574.9,301.5 570.5,306.4 566.5,312.0 C562.5,317.6 559.3,321.8 554.7,328.3 C550.1,334.8 544.1,343.6 539.0,351.0 C533.9,358.4 530.7,363.9 524.0,372.4 C517.3,380.9 507.3,392.1 499.0,402.0 C490.7,411.9 485.2,419.0 474.0,432.0 C462.8,445.0 446.8,460.7 432.0,480.0 C417.2,499.3 395.0,533.8 385.0,548.0 C375.0,562.2 375.8,557.5 372.0,565.0 C368.2,572.5 365.0,580.8 362.0,593.0 C359.0,605.2 355.4,621.8 354.0,638.0 C352.6,654.2 353.6,674.4 353.5,690.0" fill="none" stroke="#1f2582" stroke-width="4.5" stroke-linecap="round"/>
<path d="M523.5,373.0 C532.9,368.2 543.1,362.2 554.7,357.0 C566.3,351.8 581.5,345.7 593.2,341.6 C604.9,337.5 614.2,335.3 625.0,332.5 C635.8,329.7 648.1,327.0 658.0,324.7" fill="none" stroke="#1f2582" stroke-width="4" stroke-linecap="round"/>
<path d="M518.0,466.0 C504.8,471.9 488.3,477.7 474.0,485.6 C459.7,493.5 444.2,504.7 432.0,513.6 C419.8,522.5 409.3,531.7 401.0,538.8 C392.7,545.9 387.7,550.8 382.0,556.0" fill="none" stroke="#1f2582" stroke-width="4" stroke-linecap="round"/>
<path d="M540.0,510.0 C528.6,509.0 515.3,505.8 502.0,506.6 C488.7,507.4 474.0,510.3 460.0,515.0 C446.0,519.7 431.0,527.4 418.0,534.6 C405.0,541.8 392.8,551.0 382.0,558.0" fill="none" stroke="#1f2582" stroke-width="4" stroke-linecap="round"/>
<path d="M455.0,557.0 C445.6,554.4 432.8,549.6 423.6,548.4 C414.4,547.2 407.9,547.7 400.0,550.0 C392.1,552.3 383.2,558.4 376.0,562.0" fill="none" stroke="#1f2582" stroke-width="4" stroke-linecap="round"/>
<path d="M353.6,491.0 C356.1,494.3 359.3,496.8 362.0,502.0 C364.7,507.2 368.2,513.7 370.0,522.0 C371.8,530.3 372.7,544.7 373.0,552.0 C373.3,559.3 372.3,561.8 372.0,566.0" fill="none" stroke="#1f2582" stroke-width="4" stroke-linecap="round"/>
<path d="M593.0,663.0 C596.6,664.8 600.5,665.8 605.0,669.0 C609.5,672.2 615.5,678.1 620.0,682.0" fill="none" stroke="#1f2582" stroke-width="4" stroke-linecap="round"/>
<path d="M622.0,533.0 C625.6,533.6 630.0,532.8 634.0,535.0 C638.0,537.2 642.4,542.7 646.0,546.0" fill="none" stroke="#1f2582" stroke-width="4" stroke-linecap="round"/>
<path d="M682.7,467.4 C684.8,469.7 686.2,472.9 689.7,475.0 C693.2,477.1 698.5,479.8 703.7,480.0 C708.9,480.2 715.8,477.2 721.0,476.0" fill="none" stroke="#1f2582" stroke-width="4" stroke-linecap="round"/>
<path d="M597.0,170.0 C597.0,172.7 597.0,176.3 597.0,179.0 C598.0,183.9 598.8,189.2 600.5,195.4 C602.2,201.6 605.3,210.5 607.5,216.3 C609.7,222.1 611.8,225.9 613.6,230.0 C620.6,228.2 629.0,226.6 637.0,224.0 C645.0,221.4 655.2,218.8 661.5,214.6 C667.8,210.4 672.4,203.5 674.6,199.0 C676.8,194.5 676.5,190.8 674.6,187.6 C672.7,184.4 667.8,180.6 663.3,179.7 C658.8,178.8 652.5,180.3 647.6,182.4 C642.7,184.5 637.9,187.2 633.7,192.0 C629.5,196.8 625.7,205.3 622.3,211.0 C624.4,205.3 627.7,197.3 629.3,192.0 C630.9,186.7 631.2,182.9 632.0,179.0 C632.0,176.3 632.0,172.7 632.0,170.0 C621.5,170.0 607.5,170.0 597.0,170.0Z" fill="#1f2582"/>
<path d="M578.8,295.0 C575.9,287.1 571.5,276.5 569.0,268.6 C566.5,260.7 564.3,254.1 564.0,247.7 C563.7,241.3 564.5,234.6 567.4,230.3 C570.3,226.0 576.9,222.3 581.4,222.0 C585.9,221.7 591.6,225.1 594.4,228.5 C597.2,231.9 598.0,237.2 598.0,242.5 C598.0,247.8 595.8,254.9 594.4,260.0 C593.0,265.1 591.1,269.1 589.7,273.0 C595.0,267.5 601.6,258.8 607.5,254.7 C613.4,250.6 619.8,248.9 625.0,248.6 C630.2,248.3 635.8,250.5 639.0,253.0 C642.2,255.5 644.9,259.1 644.0,263.4 C643.1,267.7 639.2,274.6 633.7,279.0 C628.2,283.4 620.1,286.8 611.0,289.5 C601.9,292.2 588.5,293.4 578.8,295.0Z" fill="#1f2582"/>
<path d="M656.6,324.7 C660.2,318.0 664.1,309.9 668.5,302.5 C672.9,295.1 677.0,285.8 682.8,280.4 C688.6,275.0 697.3,271.1 703.4,270.0 C709.5,268.9 715.6,271.2 719.2,274.0 C722.8,276.8 725.3,281.9 724.8,286.7 C724.3,291.4 719.6,298.5 716.0,302.5 C712.4,306.5 707.9,308.1 703.4,310.5 C698.9,312.9 693.3,314.9 689.0,316.8 C695.7,317.8 704.7,318.1 711.3,320.0 C717.9,321.9 724.5,324.5 728.7,327.9 C732.9,331.3 735.9,336.4 736.7,340.6 C737.5,344.8 737.0,350.1 733.5,353.2 C730.0,356.3 722.3,359.3 716.0,359.3 C709.7,359.3 702.9,356.9 695.5,353.2 C688.1,349.5 678.2,342.1 671.7,337.4 C665.2,332.6 661.1,328.5 656.6,324.7Z" fill="#1f2582"/>
<path d="M689,316.8 L733,314.4" fill="none" stroke="#1f2582" stroke-width="2.5" stroke-linecap="round"/>
<path d="M732.7,314.4 C735.8,309.4 738.4,304.0 743.0,297.8 C747.6,291.6 753.8,282.1 760.4,277.2 C767.0,272.3 776.2,269.0 782.6,268.5 C789.0,268.0 795.1,271.0 798.5,274.0 C801.9,277.0 804.5,281.9 803.2,286.7 C801.9,291.4 796.0,298.5 790.5,302.5 C785.0,306.5 778.8,308.5 770.0,310.5 C761.2,312.5 747.6,313.3 738.0,314.5 C749.0,314.8 765.2,314.0 774.7,315.4 C784.2,316.8 790.0,319.3 795.3,323.0 C800.6,326.7 805.1,332.9 806.4,337.4 C807.7,341.9 806.4,347.1 803.2,350.0 C800.0,352.9 793.5,355.2 787.4,355.0 C781.3,354.8 773.4,352.5 766.8,348.5 C760.2,344.5 753.4,336.7 747.7,331.0 C742.0,325.3 737.2,319.4 732.7,314.4Z" fill="#1f2582"/>
<circle cx="828" cy="315.4" r="22" fill="#1f2582"/>
<circle cx="877.5" cy="334" r="18.6" fill="#1f2582"/>
<circle cx="911.7" cy="362.6" r="16" fill="#1f2582"/>
<path d="M353.6,491.0 C343.5,484.7 327.3,480.2 320.0,470.0 C312.7,459.8 308.3,441.3 310.0,430.0 C311.7,418.7 322.5,406.2 330.0,402.0 C337.5,397.8 347.5,401.2 355.0,405.0 C362.5,408.8 369.7,416.3 375.0,425.0 C380.3,433.7 386.5,448.2 387.0,457.0 C387.5,465.8 383.6,472.3 378.0,478.0 C372.4,483.7 360.9,487.1 353.6,491.0Z" fill="#1f2582"/>
<path d="M352.0,494.0 C343.9,489.2 331.2,477.0 325.0,478.0 C318.8,479.0 315.0,493.0 315.0,500.0 C315.0,507.0 320.8,517.5 325.0,520.0 C329.2,522.5 336.0,517.3 340.0,515.0 C344.0,512.7 347.0,509.5 349.0,506.0 C351.0,502.5 351.1,497.6 352.0,494.0Z" fill="#1f2582"/>
<path d="M838.5,417.5 C832.2,418.8 826.8,421.4 817.5,421.9 C808.2,422.4 792.8,420.5 782.5,420.6 C772.2,420.7 763.9,421.2 756.0,422.7 C748.1,424.2 740.8,425.9 735.0,429.7 C729.2,433.5 723.7,440.5 721.0,445.5 C718.3,450.5 718.7,454.6 718.6,459.5 C718.5,464.4 718.5,470.3 720.4,475.0 C722.3,479.7 725.5,483.2 730.0,487.5 C734.5,491.8 741.1,497.5 747.5,500.6 C753.9,503.8 761.2,506.4 768.5,506.4 C775.8,506.4 783.4,504.7 791.0,500.6 C798.6,496.5 807.2,489.4 814.0,482.0 C820.8,474.6 827.3,464.4 831.5,456.0 C835.7,447.6 837.8,437.9 839.0,431.5 C840.2,425.1 838.6,421.7 838.5,417.5Z" fill="#1f2582"/>
<path d="M720.4,475.5 C728.5,475.9 738.6,477.5 747.5,477.0 C756.4,476.5 765.0,475.5 773.7,472.6 C782.5,469.7 792.7,464.3 800.0,459.5 C807.3,454.7 811.5,450.1 817.5,443.7 C823.5,437.3 830.5,427.8 836.0,421.0" fill="none" stroke="#fff" stroke-width="1.3" stroke-linecap="round"/>
<g transform="translate(601.2,455.4)"><path d="M9,-3.2 L45,-16.9 C53,-19.8 60,-20.3 66,-19.8 C80,-18.6 90,-10 90,0 C90,10 80,18.6 66,19.8 C60,20.3 53,19.8 45,16.9 L9,3.2Z" fill="#1f2582" transform="rotate(-91) scale(1.0,1)"/><path d="M9,-3.2 L45,-16.9 C53,-19.8 60,-20.3 66,-19.8 C80,-18.6 90,-10 90,0 C90,10 80,18.6 66,19.8 C60,20.3 53,19.8 45,16.9 L9,3.2Z" fill="#1f2582" transform="rotate(-47) scale(1.011111111111111,1)"/><path d="M9,-3.2 L45,-16.9 C53,-19.8 60,-20.3 66,-19.8 C80,-18.6 90,-10 90,0 C90,10 80,18.6 66,19.8 C60,20.3 53,19.8 45,16.9 L9,3.2Z" fill="#1f2582" transform="rotate(-3) scale(1.0222222222222221,0.92)"/><path d="M9,-3.2 L45,-16.9 C53,-19.8 60,-20.3 66,-19.8 C80,-18.6 90,-10 90,0 C90,10 80,18.6 66,19.8 C60,20.3 53,19.8 45,16.9 L9,3.2Z" fill="#1f2582" transform="rotate(37) scale(1.0,1)"/><path d="M9,-3.2 L45,-16.9 C53,-19.8 60,-20.3 66,-19.8 C80,-18.6 90,-10 90,0 C90,10 80,18.6 66,19.8 C60,20.3 53,19.8 45,16.9 L9,3.2Z" fill="#1f2582" transform="rotate(85) scale(0.9888888888888889,1)"/><path d="M9,-3.2 L45,-16.9 C53,-19.8 60,-20.3 66,-19.8 C80,-18.6 90,-10 90,0 C90,10 80,18.6 66,19.8 C60,20.3 53,19.8 45,16.9 L9,3.2Z" fill="#1f2582" transform="rotate(135) scale(0.9555555555555556,1)"/><path d="M9,-3.2 L45,-16.9 C53,-19.8 60,-20.3 66,-19.8 C80,-18.6 90,-10 90,0 C90,10 80,18.6 66,19.8 C60,20.3 53,19.8 45,16.9 L9,3.2Z" fill="#1f2582" transform="rotate(177) scale(0.9666666666666667,0.98)"/><path d="M9,-3.2 L45,-16.9 C53,-19.8 60,-20.3 66,-19.8 C80,-18.6 90,-10 90,0 C90,10 80,18.6 66,19.8 C60,20.3 53,19.8 45,16.9 L9,3.2Z" fill="#1f2582" transform="rotate(-141) scale(0.9666666666666667,1)"/><path d="M8,0L34,-1L58,-1.5L78,-5L78,5L58,1.5L34,1Z" fill="#fff" transform="rotate(-116)"/><path d="M8,0L34,-1L58,-1.5L78,-5L78,5L58,1.5L34,1Z" fill="#fff" transform="rotate(-69)"/><path d="M8,0L34,-1L58,-1.5L78,-5L78,5L58,1.5L34,1Z" fill="#fff" transform="rotate(-25)"/><path d="M8,0L34,-1L58,-1.5L78,-5L78,5L58,1.5L34,1Z" fill="#fff" transform="rotate(17)"/><path d="M8,0L34,-1L58,-1.5L78,-5L78,5L58,1.5L34,1Z" fill="#fff" transform="rotate(61)"/><path d="M8,0L34,-1L58,-1.5L78,-5L78,5L58,1.5L34,1Z" fill="#fff" transform="rotate(110)"/><path d="M8,0L34,-1L58,-1.5L78,-5L78,5L58,1.5L34,1Z" fill="#fff" transform="rotate(156)"/><path d="M8,0L34,-1L58,-1.5L78,-5L78,5L58,1.5L34,1Z" fill="#fff" transform="rotate(198)"/><circle r="14" fill="#1f2582"/></g>
<g transform="translate(520,610)"><path d="M9,-3.2 L45,-16.9 C53,-19.8 60,-20.3 66,-19.8 C80,-18.6 90,-10 90,0 C90,10 80,18.6 66,19.8 C60,20.3 53,19.8 45,16.9 L9,3.2Z" fill="#1f2582" transform="rotate(-91) scale(1.0,1)"/><path d="M9,-3.2 L45,-16.9 C53,-19.8 60,-20.3 66,-19.8 C80,-18.6 90,-10 90,0 C90,10 80,18.6 66,19.8 C60,20.3 53,19.8 45,16.9 L9,3.2Z" fill="#1f2582" transform="rotate(-47) scale(1.011111111111111,1)"/><path d="M9,-3.2 L45,-16.9 C53,-19.8 60,-20.3 66,-19.8 C80,-18.6 90,-10 90,0 C90,10 80,18.6 66,19.8 C60,20.3 53,19.8 45,16.9 L9,3.2Z" fill="#1f2582" transform="rotate(-3) scale(1.0222222222222221,0.92)"/><path d="M9,-3.2 L45,-16.9 C53,-19.8 60,-20.3 66,-19.8 C80,-18.6 90,-10 90,0 C90,10 80,18.6 66,19.8 C60,20.3 53,19.8 45,16.9 L9,3.2Z" fill="#1f2582" transform="rotate(37) scale(1.0,1)"/><path d="M9,-3.2 L45,-16.9 C53,-19.8 60,-20.3 66,-19.8 C80,-18.6 90,-10 90,0 C90,10 80,18.6 66,19.8 C60,20.3 53,19.8 45,16.9 L9,3.2Z" fill="#1f2582" transform="rotate(85) scale(0.9888888888888889,1)"/><path d="M9,-3.2 L45,-16.9 C53,-19.8 60,-20.3 66,-19.8 C80,-18.6 90,-10 90,0 C90,10 80,18.6 66,19.8 C60,20.3 53,19.8 45,16.9 L9,3.2Z" fill="#1f2582" transform="rotate(135) scale(0.9555555555555556,1)"/><path d="M9,-3.2 L45,-16.9 C53,-19.8 60,-20.3 66,-19.8 C80,-18.6 90,-10 90,0 C90,10 80,18.6 66,19.8 C60,20.3 53,19.8 45,16.9 L9,3.2Z" fill="#1f2582" transform="rotate(177) scale(0.9666666666666667,0.98)"/><path d="M9,-3.2 L45,-16.9 C53,-19.8 60,-20.3 66,-19.8 C80,-18.6 90,-10 90,0 C90,10 80,18.6 66,19.8 C60,20.3 53,19.8 45,16.9 L9,3.2Z" fill="#1f2582" transform="rotate(-141) scale(0.9666666666666667,1)"/><path d="M8,0L34,-1L58,-1.5L78,-5L78,5L58,1.5L34,1Z" fill="#fff" transform="rotate(-116)"/><path d="M8,0L34,-1L58,-1.5L78,-5L78,5L58,1.5L34,1Z" fill="#fff" transform="rotate(-69)"/><path d="M8,0L34,-1L58,-1.5L78,-5L78,5L58,1.5L34,1Z" fill="#fff" transform="rotate(-25)"/><path d="M8,0L34,-1L58,-1.5L78,-5L78,5L58,1.5L34,1Z" fill="#fff" transform="rotate(17)"/><path d="M8,0L34,-1L58,-1.5L78,-5L78,5L58,1.5L34,1Z" fill="#fff" transform="rotate(61)"/><path d="M8,0L34,-1L58,-1.5L78,-5L78,5L58,1.5L34,1Z" fill="#fff" transform="rotate(110)"/><path d="M8,0L34,-1L58,-1.5L78,-5L78,5L58,1.5L34,1Z" fill="#fff" transform="rotate(156)"/><path d="M8,0L34,-1L58,-1.5L78,-5L78,5L58,1.5L34,1Z" fill="#fff" transform="rotate(198)"/><circle r="14" fill="#1f2582"/></g>
<g transform="translate(706,606)"><path d="M9,-3.2 L45,-16.9 C53,-19.8 60,-20.3 66,-19.8 C80,-18.6 90,-10 90,0 C90,10 80,18.6 66,19.8 C60,20.3 53,19.8 45,16.9 L9,3.2Z" fill="#1f2582" transform="rotate(-91) scale(1.0,1)"/><path d="M9,-3.2 L45,-16.9 C53,-19.8 60,-20.3 66,-19.8 C80,-18.6 90,-10 90,0 C90,10 80,18.6 66,19.8 C60,20.3 53,19.8 45,16.9 L9,3.2Z" fill="#1f2582" transform="rotate(-47) scale(1.011111111111111,1)"/><path d="M9,-3.2 L45,-16.9 C53,-19.8 60,-20.3 66,-19.8 C80,-18.6 90,-10 90,0 C90,10 80,18.6 66,19.8 C60,20.3 53,19.8 45,16.9 L9,3.2Z" fill="#1f2582" transform="rotate(-3) scale(1.0222222222222221,0.92)"/><path d="M9,-3.2 L45,-16.9 C53,-19.8 60,-20.3 66,-19.8 C80,-18.6 90,-10 90,0 C90,10 80,18.6 66,19.8 C60,20.3 53,19.8 45,16.9 L9,3.2Z" fill="#1f2582" transform="rotate(37) scale(1.0,1)"/><path d="M9,-3.2 L45,-16.9 C53,-19.8 60,-20.3 66,-19.8 C80,-18.6 90,-10 90,0 C90,10 80,18.6 66,19.8 C60,20.3 53,19.8 45,16.9 L9,3.2Z" fill="#1f2582" transform="rotate(85) scale(0.9888888888888889,1)"/><path d="M9,-3.2 L45,-16.9 C53,-19.8 60,-20.3 66,-19.8 C80,-18.6 90,-10 90,0 C90,10 80,18.6 66,19.8 C60,20.3 53,19.8 45,16.9 L9,3.2Z" fill="#1f2582" transform="rotate(135) scale(0.9555555555555556,1)"/><path d="M9,-3.2 L45,-16.9 C53,-19.8 60,-20.3 66,-19.8 C80,-18.6 90,-10 90,0 C90,10 80,18.6 66,19.8 C60,20.3 53,19.8 45,16.9 L9,3.2Z" fill="#1f2582" transform="rotate(177) scale(0.9666666666666667,0.98)"/><path d="M9,-3.2 L45,-16.9 C53,-19.8 60,-20.3 66,-19.8 C80,-18.6 90,-10 90,0 C90,10 80,18.6 66,19.8 C60,20.3 53,19.8 45,16.9 L9,3.2Z" fill="#1f2582" transform="rotate(-141) scale(0.9666666666666667,1)"/><path d="M8,0L34,-1L58,-1.5L78,-5L78,5L58,1.5L34,1Z" fill="#fff" transform="rotate(-116)"/><path d="M8,0L34,-1L58,-1.5L78,-5L78,5L58,1.5L34,1Z" fill="#fff" transform="rotate(-69)"/><path d="M8,0L34,-1L58,-1.5L78,-5L78,5L58,1.5L34,1Z" fill="#fff" transform="rotate(-25)"/><path d="M8,0L34,-1L58,-1.5L78,-5L78,5L58,1.5L34,1Z" fill="#fff" transform="rotate(17)"/><path d="M8,0L34,-1L58,-1.5L78,-5L78,5L58,1.5L34,1Z" fill="#fff" transform="rotate(61)"/><path d="M8,0L34,-1L58,-1.5L78,-5L78,5L58,1.5L34,1Z" fill="#fff" transform="rotate(110)"/><path d="M8,0L34,-1L58,-1.5L78,-5L78,5L58,1.5L34,1Z" fill="#fff" transform="rotate(156)"/><path d="M8,0L34,-1L58,-1.5L78,-5L78,5L58,1.5L34,1Z" fill="#fff" transform="rotate(198)"/><circle r="14" fill="#1f2582"/></g>
<path d="M219.5,175V676" stroke="#3a3a8a" stroke-width="1" stroke-dasharray="5 5" fill="none" shape-rendering="crispEdges"/><path d="M933.5,171V676" stroke="#3a3a8a" stroke-width="1" stroke-dasharray="5 5" fill="none" shape-rendering="crispEdges"/>
<circle cx="933.5" cy="406.3" r="4" fill="#2222cc"/>
</svg>
</div>

<!-- ===== shapes flyout ===== -->
<div class="cell" style="left:40px;top:307px"><svg viewBox="0 0 24 24"><path d="M12,21.500C3,14.500 1.500,10.500 1.500,7.500C1.500,4 4,2 6.800,2C9,2 11,3.500 12,5.800C13,3.500 15,2 17.200,2C20,2 22.500,4 22.500,7.500C22.500,10.500 21,14.500 12,21.500Z"/></svg></div>
<div class="cell" style="left:70px;top:307px"><svg viewBox="0 0 24 24"><rect x="2" y="2" width="20" height="20"/></svg></div>
<div class="cell" style="left:100px;top:307px"><svg viewBox="0 0 24 24"><circle cx="12" cy="12" r="10"/><circle cx="12" cy="12" r="5"/></svg></div>
<div class="cell" style="left:130px;top:307px"><svg viewBox="0 0 24 24"><path d="M12,3L22,21H2Z"/></svg></div>
<div class="cell" style="left:160px;top:307px"><svg viewBox="0 0 24 24"><path d="M3,2.500V21.500H22Z"/></svg></div>
<div class="cell" style="left:190px;top:307px"><svg viewBox="0 0 24 24"><path d="M12,2L22,12L12,22L2,12Z"/></svg></div>
<div class="cell" style="left:40px;top:337px"><svg viewBox="0 0 24 24"><path d="M12.0,2.3 L22.0,9.6 L18.2,21.3 L5.8,21.3 L2.0,9.6Z"/></svg></div>
<div class="cell" style="left:70px;top:337px"><svg viewBox="0 0 24 24"><path d="M22.5,12.0 L17.2,21.1 L6.8,21.1 L1.5,12.0 L6.7,2.9 L17.2,2.9Z"/></svg></div>
<div class="cell" style="left:100px;top:337px"><svg viewBox="0 0 24 24"><path d="M12.0,1.8 L20.2,5.8 L22.2,14.6 L16.6,21.8 L7.4,21.8 L1.8,14.6 L3.8,5.8Z"/></svg></div>
<div class="cell" style="left:130px;top:337px"><svg viewBox="0 0 24 24"><path d="M22.0,16.1 L16.1,22.0 L7.9,22.0 L2.0,16.1 L2.0,7.9 L7.9,2.0 L16.1,2.0 L22.0,7.9Z"/></svg></div>
<div class="cell" style="left:160px;top:337px"><svg viewBox="0 0 24 24"><path d="M22.5,12.0 L20.5,18.2 L15.2,22.0 L8.8,22.0 L3.5,18.2 L1.5,12.0 L3.5,5.8 L8.8,2.0 L15.2,2.0 L20.5,5.8Z"/></svg></div>
<div class="cell" style="left:190px;top:337px"><svg viewBox="0 0 24 24"><path d="M22.1,14.7 L19.4,19.4 L14.7,22.1 L9.3,22.1 L4.6,19.4 L1.9,14.7 L1.9,9.3 L4.6,4.6 L9.3,1.9 L14.7,1.9 L19.4,4.6 L22.1,9.3Z"/></svg></div>
<div class="cell" style="left:40px;top:367px"><svg viewBox="0 0 24 24"><path d="M12.0,2.0 L14.5,9.1 L22.0,9.3 L16.0,13.8 L18.2,21.0 L12.0,16.7 L5.8,21.0 L8.0,13.8 L2.0,9.3 L9.5,9.1Z"/></svg></div>
<div class="cell" style="left:70px;top:367px"><svg viewBox="0 0 24 24"><path d="M6.500,2.500H17.500L22,21.500H2Z"/></svg></div>
<div class="cell" style="left:100px;top:367px"><svg viewBox="0 0 24 24"><path d="M12,2L22,11.500H17V21.500H7V11.500H2Z"/></svg></div>
<div class="cell" style="left:130px;top:367px"><svg viewBox="0 0 24 24"><path d="M6.500,2.500H20.500c1.500,0 1.500,2.500 0,2.500H20V21.500H5.500c-2.500,0-2.500-3.500 0-3.500H6.500Z M6.500,5H20 M5.500,18c1.200,0 1.200,2 0,2"/></svg></div>
<div class="cell" style="left:160px;top:367px"><svg viewBox="0 0 24 24"><circle cx="12" cy="12" r="10"/><circle cx="8.500" cy="8.500" r=".9"/><circle cx="15.500" cy="8.500" r=".9"/><path d="M6.500,14.500c2.500,3.500 8.500,3.500 11,0"/></svg></div>
<div class="cell" style="left:190px;top:367px"><svg viewBox="0 0 24 24"><path d="M13.500,2c-1.500,0-1.800,1-1.800,2.500v5.500c0,1.200-.3,2-1.500,2c1.200,0 1.500,.8 1.500,2v5.500c0,1.500 .3,2.500 1.800,2.500"/></svg></div>
<div class="cell" style="left:40px;top:397px"><svg viewBox="0 0 24 24"><circle cx="12" cy="4.500" r="2.600"/><path d="M12,7v8.500M4,10h16M12,15.500L5.500,22.500M12,15.500L18.500,22.500"/></svg></div>
<div class="cell" style="left:70px;top:397px"><svg viewBox="0 0 24 24"><path d="M4.500,2.500H20c1.200,0 2,.8 2,2V13c0,1.200-.8,2-2,2H10L4.500,21.500L6,15H4.500c-1.200,0-2-.8-2-2V4.500c0-1.200,.8-2 2-2Z"/></svg></div>
<div class="cell" style="left:100px;top:397px"><svg viewBox="0 0 24 24"><path transform="translate(-1.800,-1.800) scale(1.150)" stroke-width=".87" d="M6,8c-2.500,-.5-4,2.500-2.500,4c-2,1.500-1,4.500 1.500,4.500c.5,2 3.500,2.500 4.500,1c1.500,2 4.500,1.500 5,-.5c2,1 4.500-.5 4-2.500c2.500-1 2.500-4 .5-5c.5-2.500-2.500-4-4-2.500c-1-2-4-2-5,0c-1.500-1.500-4-1-4,1Z"/></svg></div>
<div class="cell" style="left:130px;top:397px"><svg viewBox="0 0 24 24"><path d="M2,8.500V18c0,4 20,4 20,0V8.500"/><ellipse cx="12" cy="8.500" rx="10" ry="3.300"/></svg></div>
<div class="cell" style="left:160px;top:397px"><svg viewBox="0 0 24 24"><path d="M3,22V10.500C3,1.500 17,1.500 17,10.500V12h-3l5.500,6.500L22.500,12H21V10.500C21,-3.500-1,-3.500 3,10.500" style="display:none"/><path d="M3,22V10C3,0 19,0 19,10v2h3l-5.500,6.500L11,12h3v-2c0-3.500-6-3.500-6,0V22Z"/></svg></div>
<div class="cell" style="left:190px;top:397px"><svg viewBox="0 0 24 24"><path d="M18,2L22.500,7.500H20V18.500H8.500V21.500L2,16.500L8.500,11.500V14.500H16V7.500H13.500Z"/></svg></div>
<div class="cell" style="left:40px;top:427px"><svg viewBox="0 0 24 24"><path d="M12,2L16,6L15.300,7.300L16.700,8.700L18,8L22,12L18,16L16.700,15.300L15.300,16.700L16,18L12,22L8,18L8.700,16.700L7.300,15.300L6,16L2,12L6,8L7.300,8.700L8.700,7.300L8,6Z"/></svg></div>
<div class="cell" style="left:70px;top:427px"><svg viewBox="0 0 24 24"><path d="M8.500,2h7v6.500H22v7h-6.500V22h-7v-6.500H2v-7h6.500Z"/></svg></div>
<div class="cell" style="left:100px;top:427px"><svg viewBox="0 0 24 24"><path d="M4.500,2h15c0,1.500 1,2.500 2.500,2.500v15c-1.500,0-2.500,1-2.500,2.500h-15c0-1.500-1-2.500-2.500-2.500v-15c1.500,0 2.500-1 2.500-2.500Z"/></svg></div>
<div class="cell" style="left:130px;top:427px"><svg viewBox="0 0 24 24"><path d="M2.500,2.500h19v15.500l-3.500,3.500H2.500Z M21.500,18h-3.500v3.500"/></svg></div>
<div class="cat" style="top:231px;height:22px;font-weight:700">Basic</div>
<div class="cat" style="top:253px;height:21px">Objects</div>
<div class="cat" style="top:274px;height:22px">Symbols</div>
<div class="cat" style="top:296px;height:22px">Arrows</div>
<div class="cat" style="top:318px;height:21px">Flowchart</div>
<div class="cat" style="top:339px;height:22px">Animals</div>
<div class="cat" style="top:361px;height:22px">Cards &amp; Chess</div>
<div class="cat" style="top:383px;height:21px">Dialog balloons</div>
<div class="cat" style="top:404px;height:22px">Electronics</div>
<div class="cat" style="top:426px;height:22px">Mathematical</div>
<div class="cat" style="top:448px;height:21px">Music</div>
<div class="cat" style="top:469px;height:22px">Miscellaneous</div>
<div class="cat" style="top:491px;height:22px">raphaeljs.com set 1</div>
<div class="cat" style="top:513px;height:22px">raphaeljs.com set 2</div>
<!-- ===== scrollbars ===== -->
<div class="abs" style="left:1110px;top:162px;width:18px;height:531px;background:#f1f1f1;border-right:1px solid #999;border-top:1px solid #8c8c8c"></div>
<div class="abs" style="left:1127px;top:162px;width:14px;height:1px;background:#8c8c8c"></div>
<div class="abs" style="left:41px;top:676px;width:1087px;height:18px;background:#f1f1f1;border-bottom:1px solid #767676;border-left:1px solid #8c8c8c;border-right:1px solid #b9b9b9"></div>
<div class="abs" style="left:1110px;top:676px;width:17px;height:17px;background:#fbfbfb"></div>
<!-- thumbs -->
<div class="abs" style="left:324px;top:678px;width:495px;height:13px;background:#c1c1c1"></div>
<div class="abs" style="left:1112px;top:379px;width:13px;height:78px;background:#c1c1c1"></div>
<!-- arrows -->
<svg class="abs" style="left:47.500px;top:680px" width="4.500" height="8" viewBox="0 0 6 10"><path d="M5.500,.5V9.500L.5,5z" fill="#444"/></svg>
<svg class="abs" style="left:1100px;top:680px" width="4.500" height="8" viewBox="0 0 6 10"><path d="M.5,.5V9.500L5.500,5z" fill="#444"/></svg>
<svg class="abs" style="left:1114.500px;top:169.500px" width="8" height="4.500" viewBox="0 0 10 6"><path d="M.5,5.500H9.500L5,.5z" fill="#444"/></svg>
<svg class="abs" style="left:1114.500px;top:665px" width="8" height="4.500" viewBox="0 0 10 6"><path d="M.5,.5H9.500L5,5.500z" fill="#444"/></svg>
<!-- side panel handle -->
<div class="abs" style="left:1122px;top:376px;width:19px;height:86px;background:#d3d3d3;border-radius:7px 0 0 7px;box-shadow:-1px 0 0 rgba(255,255,255,.5)"></div>
<div class="abs se" style="left:1124px;top:381px;width:14px;font-size:10.600px;font-weight:700;line-height:13px;text-align:center;color:#000">L<br>a<br>y<br>e<br>r<br>s</div>

<!-- ===== bottom tools ===== -->
<svg class="abs" style="left:44px;top:703px" width="18" height="18" viewBox="0 0 18 18"><path d="M10.500,10.500l6,6" stroke="#5e5e5e" stroke-width="2" stroke-linecap="round"/><circle cx="7" cy="7" r="6" fill="#a3c6f8" stroke="#6788c2" stroke-width="1.400"/></svg>
<div class="inp spin" style="left:70px;top:699px;width:55px;height:23px;padding-left:3px">100</div>
<svg class="abs" style="left:109px;top:704px" width="10" height="14" viewBox="0 0 10 14" fill="none" stroke="#111" stroke-width="1.900"><path d="M1.200,5L5,1.500L8.800,5M1.200,9L5,12.500L8.800,9"/></svg>
<div class="dd" style="left:126px;top:701px"></div>
<div class="sep" style="left:145px;top:700px;height:25px"></div>
<!-- fill -->
<div class="abs" style="left:149px;top:699px;width:52px;height:26px;background:#dfdfdf;border-radius:3px"></div>
<svg class="abs" style="left:155px;top:702px" width="17" height="18" viewBox="0 0 17 18"><path d="M6.500,1c-2.500,1-3,4-2,6.500" fill="none" stroke="#555" stroke-width="1.200"/><path d="M7.500,3.500l6,6.500l-6.500,6l-6-6.500z" fill="#e9e9e9" stroke="#555" stroke-width="1.100" stroke-linejoin="round"/><path d="M3,9l5-5l5.500,6z" fill="#8a8a8a"/><path d="M13.500,10c1.500,1.500 2.500,3.500 2.500,5c0,1-.6,1.700-1.400,1.700s-1.400-.7-1.400-1.700c0-1.500 .3-3.500 .3-5z" fill="#7d7d7d"/></svg>
<div class="abs" style="left:178px;top:702px;width:18px;height:18px;background:#ff0000;border:1px solid #c23a3a"></div>
<!-- stroke -->
<div class="abs" style="left:209px;top:699px;width:130px;height:26px;background:#dfdfdf;border-radius:3px"></div>
<div class="abs" style="left:215px;top:703px;width:16px;height:16px;border:3px solid #828282;background:#eee"></div>
<div class="abs" style="left:238px;top:702px;width:18px;height:18px;background:#000"></div>
<div class="inp spin" style="left:262px;top:699px;width:55px;height:23px"></div>
<svg class="abs" style="left:301px;top:704px" width="10" height="14" viewBox="0 0 10 14" fill="none" stroke="#111" stroke-width="1.900"><path d="M1.200,5L5,1.500L8.800,5M1.200,9L5,12.500L8.800,9"/></svg>
<div class="abs" style="left:321px;top:704.500px;font-size:11px;line-height:14px;color:#444;letter-spacing:-1.300px;font-family:'DejaVu Sans',sans-serif">&gt;&gt;</div>
<!-- opacity -->
<div class="abs" style="left:341px;top:699px;width:108px;height:26px;background:#dfdfdf;border-radius:3px"></div>
<svg class="abs" style="left:345px;top:702px" width="18" height="18" viewBox="0 0 18 18"><defs><linearGradient id="gOp" x1="1" y1="0" x2="0" y2="1"><stop offset="0" stop-color="#fff"/><stop offset=".5" stop-color="#777"/><stop offset="1" stop-color="#111"/></linearGradient></defs><rect width="18" height="18" fill="url(#gOp)"/><rect x="0" y="0" width="9" height="9" fill="#000" opacity=".35"/><rect x="9" y="9" width="9" height="9" fill="#000" opacity=".35"/></svg>
<div class="inp spin" style="left:368px;top:699px;width:55px;height:23px;padding-left:3px">100</div>
<svg class="abs" style="left:407px;top:704px" width="10" height="14" viewBox="0 0 10 14" fill="none" stroke="#111" stroke-width="1.900"><path d="M1.200,5L5,1.500L8.800,5M1.200,9L5,12.500L8.800,9"/></svg>
<div class="dd" style="left:430px;top:701px"></div>

<div class="abs" style="left:485px;top:699px;width:642px;height:26px;background:#efefef;border-radius:3px;box-shadow:inset 1px 1px 2px #fff,1px 1px 1px rgba(0,0,0,.06)"></div>
<svg class="abs" style="left:490px;top:704px" width="15" height="15" viewBox="0 0 15 15"><rect width="15" height="15" fill="#fff"/><path d="M.5,.5L14.500,14.500M14.500,.5L.5,14.500" stroke="#d40000" stroke-width="1"/></svg>
<div class="abs" style="left:505px;top:704px;width:15px;height:15px;background:#000000"></div>
<div class="abs" style="left:520px;top:704px;width:15px;height:15px;background:#3f3f3f"></div>
<div class="abs" style="left:535px;top:704px;width:15px;height:15px;background:#7f7f7f"></div>
<div class="abs" style="left:550px;top:704px;width:15px;height:15px;background:#bfbfbf"></div>
<div class="abs" style="left:565px;top:704px;width:15px;height:15px;background:#ffffff"></div>
<div class="abs" style="left:580px;top:704px;width:15px;height:15px;background:#ff0000"></div>
<div class="abs" style="left:595px;top:704px;width:15px;height:15px;background:#ff7f00"></div>
<div class="abs" style="left:610px;top:704px;width:15px;height:15px;background:#ffff00"></div>
<div class="abs" style="left:625px;top:704px;width:15px;height:15px;background:#7fff00"></div>
<div class="abs" style="left:640px;top:704px;width:15px;height:15px;background:#00ff00"></div>
<div class="abs" style="left:655px;top:704px;width:15px;height:15px;background:#00ff7f"></div>
<div class="abs" style="left:670px;top:704px;width:15px;height:15px;background:#00ffff"></div>
<div class="abs" style="left:685px;top:704px;width:15px;height:15px;background:#007fff"></div>
<div class="abs" style="left:700px;top:704px;width:15px;height:15px;background:#0000ff"></div>
<div class="abs" style="left:715px;top:704px;width:15px;height:15px;background:#7f00ff"></div>
<div class="abs" style="left:730px;top:704px;width:15px;height:15px;background:#ff00ff"></div>
<div class="abs" style="left:745px;top:704px;width:15px;height:15px;background:#ff007f"></div>
<div class="abs" style="left:760px;top:704px;width:15px;height:15px;background:#7f0000"></div>
<div class="abs" style="left:775px;top:704px;width:15px;height:15px;background:#7f3f00"></div>
<div class="abs" style="left:790px;top:704px;width:15px;height:15px;background:#7f7f00"></div>
<div class="abs" style="left:805px;top:704px;width:15px;height:15px;background:#3f7f00"></div>
<div class="abs" style="left:820px;top:704px;width:15px;height:15px;background:#007f00"></div>
<div class="abs" style="left:835px;top:704px;width:15px;height:15px;background:#007f3f"></div>
<div class="abs" style="left:850px;top:704px;width:15px;height:15px;background:#007f7f"></div>
<div class="abs" style="left:865px;top:704px;width:15px;height:15px;background:#003f7f"></div>
<div class="abs" style="left:880px;top:704px;width:15px;height:15px;background:#00007f"></div>
<div class="abs" style="left:895px;top:704px;width:15px;height:15px;background:#3f007f"></div>
<div class="abs" style="left:910px;top:704px;width:15px;height:15px;background:#7f007f"></div>
<div class="abs" style="left:925px;top:704px;width:15px;height:15px;background:#7f003f"></div>
<div class="abs" style="left:940px;top:704px;width:15px;height:15px;background:#ffaaaa"></div>
<div class="abs" style="left:955px;top:704px;width:15px;height:15px;background:#ffd4aa"></div>
<div class="abs" style="left:970px;top:704px;width:15px;height:15px;background:#ffffaa"></div>
<div class="abs" style="left:985px;top:704px;width:15px;height:15px;background:#d4ffaa"></div>
<div class="abs" style="left:1000px;top:704px;width:15px;height:15px;background:#aaffaa"></div>
<div class="abs" style="left:1015px;top:704px;width:15px;height:15px;background:#aaffd4"></div>
<div class="abs" style="left:1030px;top:704px;width:15px;height:15px;background:#aaffff"></div>
<div class="abs" style="left:1045px;top:704px;width:15px;height:15px;background:#aad4ff"></div>
<div class="abs" style="left:1060px;top:704px;width:15px;height:15px;background:#aaaaff"></div>
<div class="abs" style="left:1075px;top:704px;width:15px;height:15px;background:#d4aaff"></div>
<div class="abs" style="left:1090px;top:704px;width:15px;height:15px;background:#ffaaff"></div>
<div class="abs" style="left:1105px;top:704px;width:15px;height:15px;background:#ffaad4"></div>

<!-- window border -->
<div class="abs" style="left:0;top:0;width:1143px;height:757px;border:1px solid #2b6d9d;pointer-events:none"></div>
<div class="abs" style="left:1px;top:1px;width:1px;height:754px;background:#b0d4f2"></div><div class="abs" style="left:1141px;top:1px;width:1px;height:754px;background:#cfe2f1"></div>
</div>
</body>
</html>
